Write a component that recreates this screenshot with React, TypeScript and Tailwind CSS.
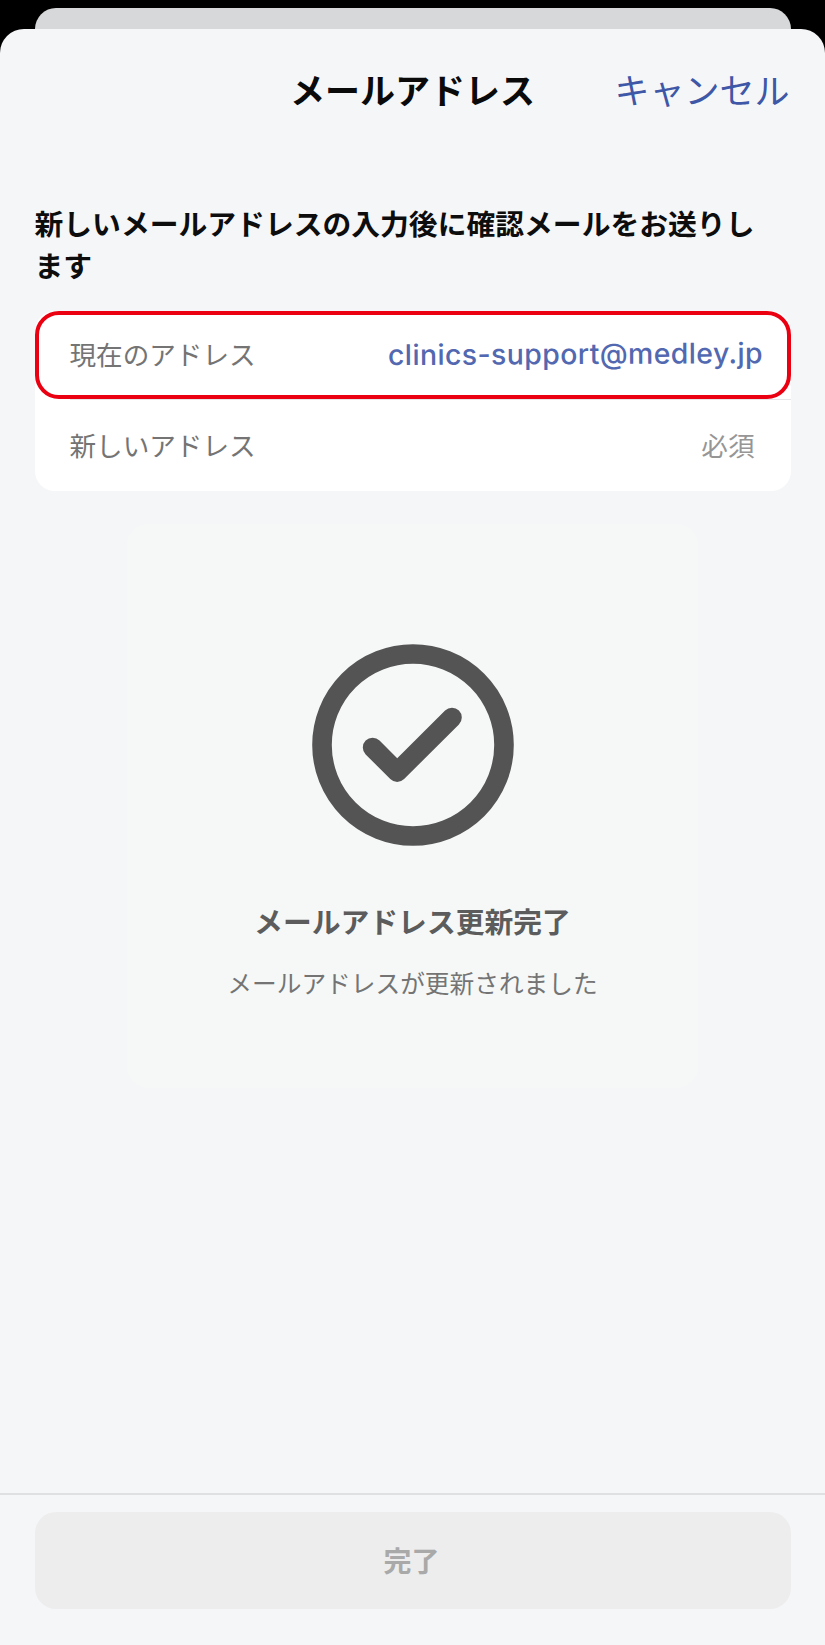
import type { ReactNode } from "react";

function Field({ label, children }: { label: string; children: ReactNode }) {
  return (
    <div className="flex items-center justify-between pb-[2px] pl-[35px] text-[26.6px] leading-[40px]">
      <span className="text-[#747474]">{label}</span>
      {children}
    </div>
  );
}

function CheckCircle() {
  return (
    <svg width="202" height="202" viewBox="0 0 202 202" fill="none" stroke="#545454" className="block">
      <circle cx="101" cy="101" r="91" strokeWidth="19.6" />
      <path d="M60.6 103.5L85.2 128.1L140 73.5" strokeWidth="19.6" strokeLinecap="round" strokeLinejoin="round" />
    </svg>
  );
}

export default function App() {
  return (
    <div className="flex h-[1645px] w-[825px] flex-col overflow-hidden bg-black font-['Noto_Sans_CJK_JP',sans-serif]">
      <div className="mx-[34.5px] mt-[7.5px] h-[21.5px] shrink-0 rounded-t-[21px] bg-[#d7d8d9]" />
      <div className="flex min-h-0 flex-1 flex-col rounded-t-[24px] bg-[#f5f6f8]">
        <header className="grid h-[120px] grid-cols-[1fr_auto_1fr] items-center px-[35.5px]">
          <h1 className="col-start-2 text-[35px] leading-[52px] font-bold text-[#0a0a0a]">メールアドレス</h1>
          <button className="justify-self-end text-[35px] leading-[52px] text-[#3e57a6]">キャンセル</button>
        </header>

        <main className="flex flex-1 flex-col px-[34.5px] pt-[53px]">
          <h2 className="text-[28.8px] leading-[42px] font-bold text-[#0d0d0d]">
            新しいメールアドレスの入力後に確認メールをお送りし
            <br />
            ます
          </h2>

          <section className="mt-[25px] flex h-[180px] flex-col rounded-[20px] bg-white">
            <div className="flex h-[88px] flex-col justify-center rounded-[24px] border-4 border-[#eb0012] [&>div]:-mx-1">
              <Field label="現在のアドレス">
                <span className="-rotate-[0.3deg] pr-[27.5px] font-['Inter',sans-serif] text-[28.5px] font-medium tracking-[0.36px] text-[#5268b0]">
                  clinics-support@medley.jp
                </span>
              </Field>
            </div>
            <div className="ml-[35px] h-px bg-[#e6e6e8]" />
            <div className="flex flex-1 flex-col justify-center">
              <Field label="新しいアドレス">
                <span className="pr-[36px] text-[#969696]">必須</span>
              </Field>
            </div>
          </section>

          <section className="mt-[33px] flex h-[564px] w-[571px] flex-col items-center self-center rounded-[22px] bg-[#f6f8f7] pt-[119.5px]">
            <CheckCircle />
            <p className="mt-[54.5px] text-[28.8px] leading-[42px] font-bold text-[#5c5c5c]">メールアドレス更新完了</p>
            <p className="mt-[21.5px] text-[24.7px] leading-[36px] text-[#747474]">メールアドレスが更新されました</p>
          </section>
        </main>

        <footer className="h-[152px] border-t-2 border-[#dfe0e2] px-[34.5px] pt-[17px]">
          <button className="flex h-[97px] w-full items-center justify-center rounded-[21px] bg-[#ededed] pr-[2px] pb-[2px] text-[28px] font-bold text-[#a9a9a9]">
            完了
          </button>
        </footer>
      </div>
    </div>
  );
}
